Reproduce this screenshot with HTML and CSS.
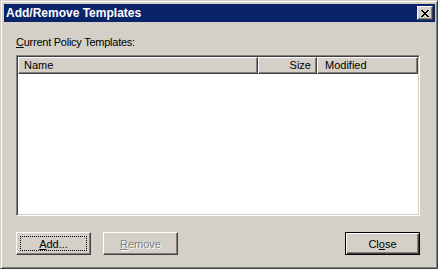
FILE: index.html
```html
<!DOCTYPE html>
<html lang="en">
<head>
    <meta charset="UTF-8">
    <title>Add/Remove Templates</title>
    <link rel="stylesheet" href="styles.css">
</head>
<body>
    <div class="window">
        <div class="titlebar">
            <span class="title">Add/Remove Templates</span>
            <button class="close-x" aria-label="Close">
                <svg width="8" height="7" viewBox="0 0 8 7">
                    <path d="M0 0h2v1h1v1h2v-1h1v-1h2v1h-1v1h-1v1h-1v1h1v1h1v1h1v1h-2v-1h-1v-1h-2v1h-1v1h-2v-1h1v-1h1v-1h1v-1h-1v-1h-1v-1h-1z" fill="#000"/>
                </svg>
            </button>
        </div>
        <div class="content">
            <div class="label"><u>C</u>urrent Policy Templates:</div>
            <div class="listview">
                <div class="header">
                    <div class="col col-name">Name</div>
                    <div class="col col-size">Size</div>
                    <div class="col col-mod">Modified</div>
                </div>
                <div class="rows"></div>
            </div>
            <div class="buttons">
                <button class="btn focus"><u>A</u>dd...</button>
                <button class="btn disabled"><u>R</u>emove</button>
                <button class="btn default">Cl<u>o</u>se</button>
            </div>
        </div>
    </div>
</body>
</html>
```

FILE: styles.css
```css
* {
    box-sizing: border-box;
}
body {
    margin: 0;
    background-color: #d4d0c8;
    font-family: "Liberation Sans", Arial, sans-serif;
    font-size: 11px;
    color: #000;
}
.window {
    width: 438px;
    height: 269px;
    display: flex;
    flex-direction: column;
    background-color: #d4d0c8;
    border: 1px solid;
    border-color: #d4d0c8 #404040 #404040 #d4d0c8;
    box-shadow: inset 1px 1px #fff, inset -1px -1px #808080;
    padding: 3px 2px 2px 3px;
}
.titlebar {
    height: 18px;
    background-color: #0a246a;
    display: flex;
    align-items: center;
    justify-content: space-between;
    padding: 0 2px 0 2px;
}
.title {
    color: #fff;
    font-weight: bold;
    font-size: 12px;
}
.close-x {
    width: 16px;
    height: 14px;
    padding: 0;
    background-color: #d4d0c8;
    border: 1px solid;
    border-color: #fff #404040 #404040 #fff;
    box-shadow: inset -1px -1px #808080;
    display: flex;
    align-items: center;
    justify-content: center;
}
.content {
    flex: 1;
    display: flex;
    flex-direction: column;
    padding: 14px 15px 0 12px;
}
.label {
    height: 13px;
    line-height: 13px;
    margin-bottom: 6px;
    letter-spacing: -0.25px;
}
.listview {
    width: 404px;
    height: 161px;
    display: flex;
    flex-direction: column;
    background-color: #fff;
    border: 1px solid;
    border-color: #808080 #fff #fff #808080;
    box-shadow: inset 1px 1px #404040, inset -1px -1px #d4d0c8;
    padding: 1px;
}
.header {
    display: flex;
    height: 17px;
}
.col {
    background-color: #d4d0c8;
    border: 1px solid;
    border-color: #fff #404040 #404040 #fff;
    box-shadow: inset -1px -1px #808080;
    line-height: 14px;
    padding: 0 5px;
}
.col-name {
    width: 240px;
}
.col-size {
    width: 59px;
    text-align: right;
}
.col-mod {
    width: 101px;
    padding-left: 7px;
}
.rows {
    flex: 1;
}
.buttons {
    display: flex;
    margin-top: 16px;
}
.btn {
    width: 75px;
    height: 23px;
    font-family: "Liberation Sans", Arial, sans-serif;
    font-size: 11px;
    color: #000;
    background-color: #d4d0c8;
    border: 1px solid;
    border-color: #fff #404040 #404040 #fff;
    box-shadow: inset -1px -1px #808080;
    padding: 0;
    margin-right: 12px;
}
.btn.focus {
    outline: 1px dotted #000;
    outline-offset: -5px;
}
.btn.disabled {
    color: #808080;
    text-shadow: 1px 1px #fff;
}
.btn.default {
    margin-left: auto;
    margin-right: 0;
    border-color: #000;
    box-shadow: inset 1px 1px #fff, inset -1px -1px #404040, inset -2px -2px #808080;
}
```
